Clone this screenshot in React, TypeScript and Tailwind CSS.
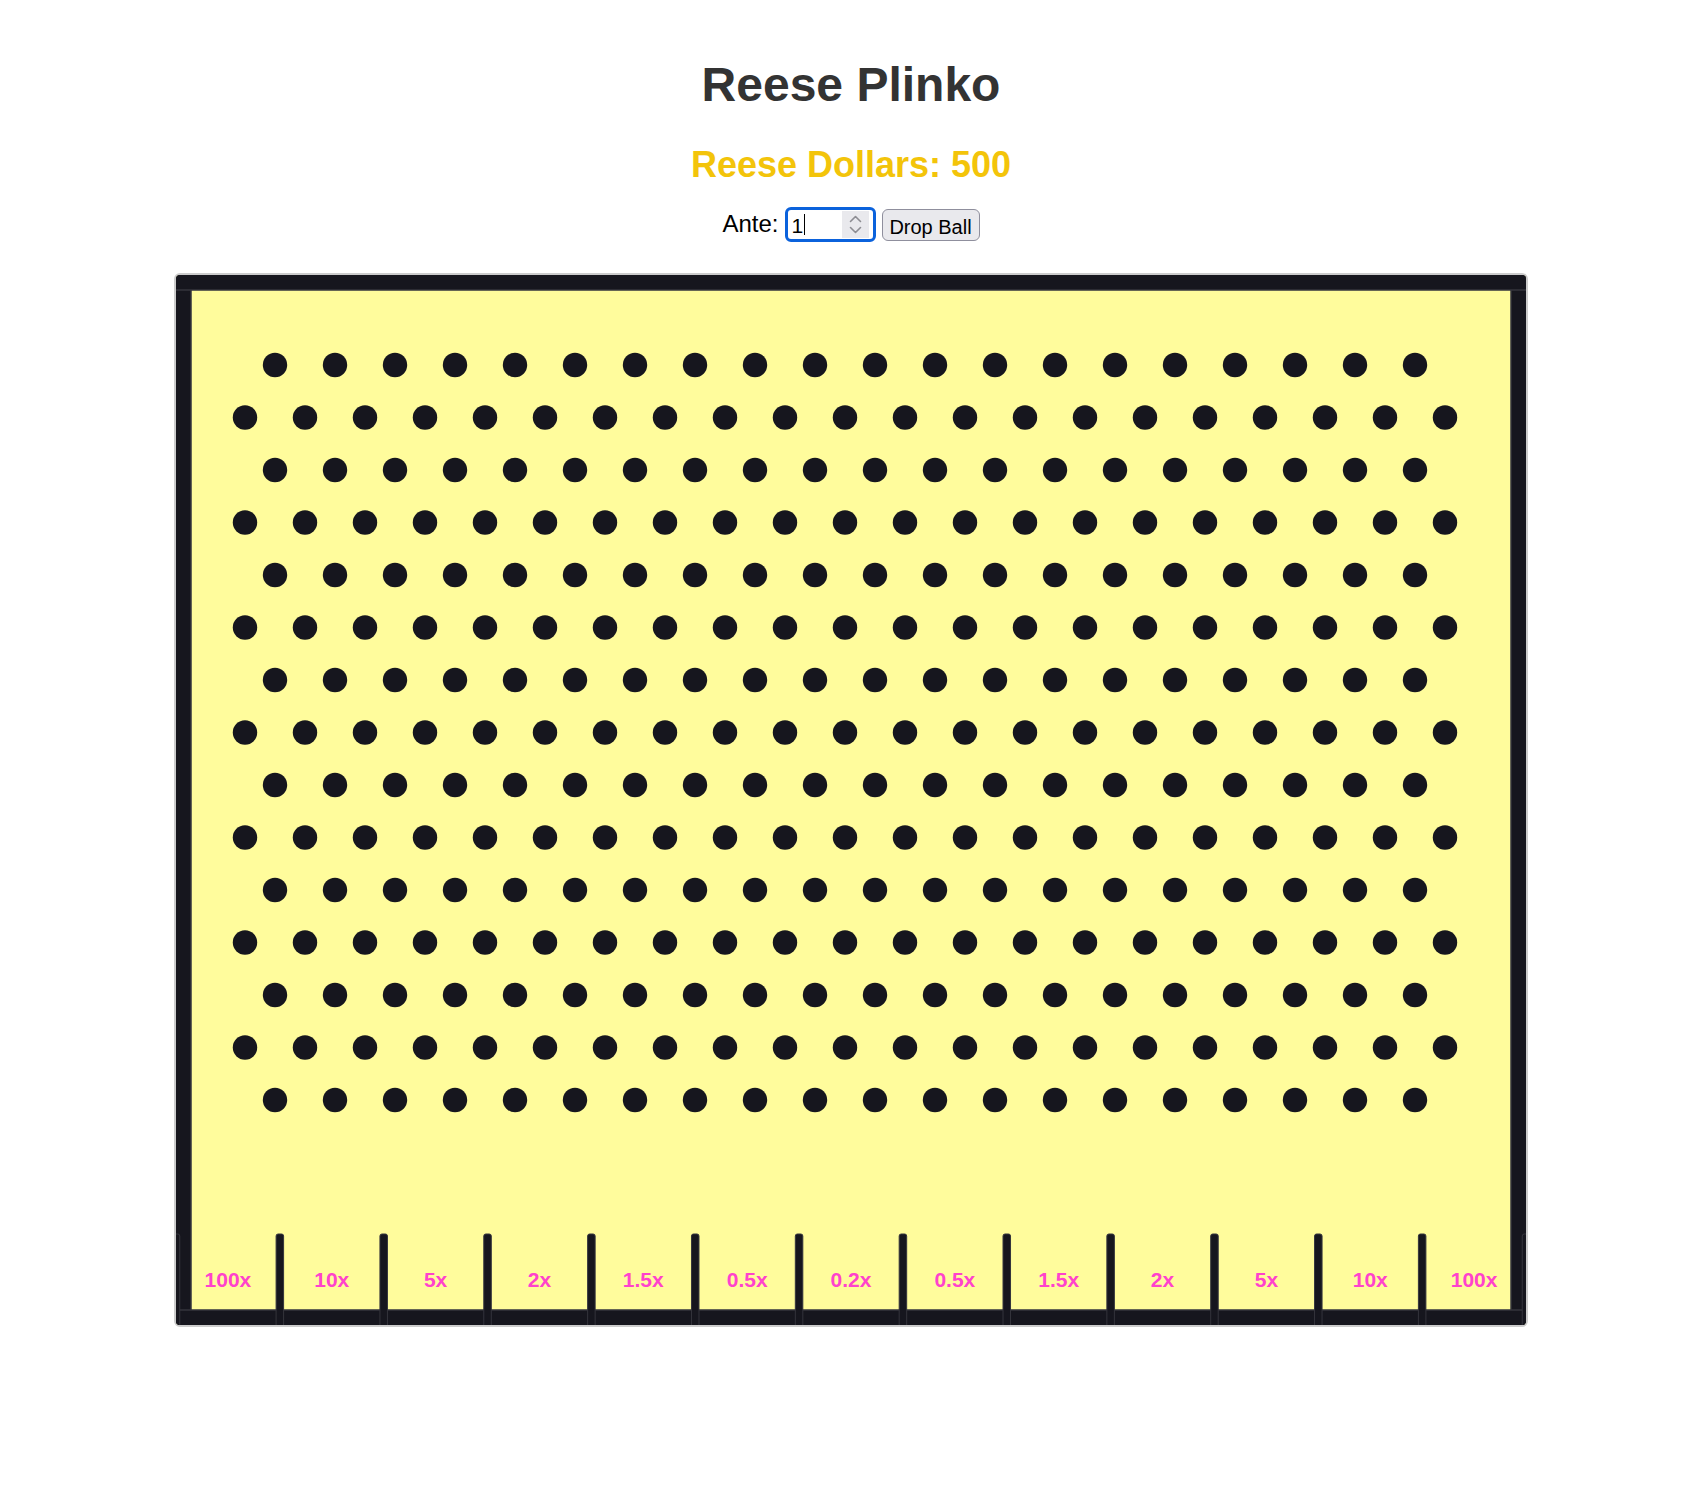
import React from 'react';

const W = 1350;
const H = 1050;
const DARK = '#16161e';
const EDGE = '#34343c';
const SLOT_LABELS = ['100x', '10x', '5x', '2x', '1.5x', '0.5x', '0.2x', '0.5x', '1.5x', '2x', '5x', '10x', '100x'];

// pegs: 15 rows, alternating 20 / 21 across
const pegs: { x: number; y: number }[] = [];
for (let row = 0; row < 15; row++) {
  const count = row % 2 === 0 ? 20 : 21;
  const startX = row % 2 === 0 ? 99 : 69;
  for (let i = 0; i < count; i++) {
    pegs.push({ x: startX + i * 60, y: 90 + row * 52.5 });
  }
}

const slotWidth = W / 13;

function Board() {
  return (
    <svg width={W} height={H} viewBox={`0 0 ${W} ${H}`} className="block">
      <rect x={0} y={0} width={W} height={H} fill="#fffc9c" />

      {/* walls */}
      <rect x={-15} y={-15} width={30} height={H + 30} fill={DARK} stroke={EDGE} strokeWidth={1.5} />
      <rect x={W - 15} y={-15} width={30} height={H + 30} fill={DARK} stroke={EDGE} strokeWidth={1.5} />
      <rect x={-15} y={H - 15} width={W + 30} height={30} fill={DARK} stroke={EDGE} strokeWidth={1.5} />
      <rect x={-15} y={-15} width={W + 30} height={30} fill={DARK} stroke={EDGE} strokeWidth={1.5} />

      {/* slot dividers */}
      {Array.from({ length: 14 }).map((_, k) => (
        <rect
          key={k}
          x={k * slotWidth - 3.75}
          y={959}
          width={7.5}
          height={100}
          rx={2}
          fill={DARK}
          stroke={EDGE}
          strokeWidth={1}
        />
      ))}

      {/* pegs */}
      {pegs.map((p, i) => (
        <circle key={i} cx={p.x} cy={p.y} r={12.2} fill={DARK} />
      ))}

      {/* multipliers */}
      {SLOT_LABELS.map((label, k) => (
        <text
          key={k}
          x={(k + 0.5) * slotWidth}
          y={1012}
          textAnchor="middle"
          fill="#ff42cc"
          fontFamily="'Liberation Sans', Arial, sans-serif"
          fontWeight="bold"
          fontSize={21}
        >
          {label}
        </text>
      ))}
    </svg>
  );
}

export default function App() {
  return (
    <div className="min-h-screen bg-white text-center font-['Liberation_Sans',Arial,sans-serif] pt-[57px]">
      <h1 className="pl-[3px] text-[48px] leading-[56px] font-bold text-[#333]">Reese Plinko</h1>
      <h2 className="pl-[3px] mt-[31px] text-[36px] leading-[42px] font-bold text-[#f3c40a]">Reese Dollars: 500</h2>

      {/* controls */}
      <div className="pl-[3px] mt-[21px] flex justify-center items-start h-[35px]">
        <label className="mt-[1px] text-[24px] leading-[32px] text-black">Ante:</label>
        <div className="ml-[6px] w-[91px] h-[35px] border-[3px] border-[#0b62dc] rounded-[6px] flex items-center pl-[4px] pr-[4px] bg-white">
          <span className="mt-[2px] text-[21px] leading-[21px] text-black">1</span>
          <span className="ml-[1px] w-px h-[21px] bg-black" />
          <div className="ml-auto w-[27px] h-[27px] bg-[#e9e9ed] flex items-center justify-center">
            <svg width="27" height="27" viewBox="0 0 27 27" fill="none" stroke="#8d8d93" strokeWidth="1.6" strokeLinecap="round" strokeLinejoin="round">
              <path d="M8.5 10.5 L13.5 5.5 L18.5 10.5" />
              <path d="M8.5 16.5 L13.5 21.5 L18.5 16.5" />
            </svg>
          </div>
        </div>
        <button className="ml-[6px] mt-[2px] w-[98px] h-[32px] pt-[2px] border-[1.5px] border-[#8f8f9d] bg-[#e9e9ed] rounded-[6px] text-[20px] text-black">
          Drop Ball
        </button>
      </div>

      {/* board */}
      <div className="mt-[31px] flex justify-center pl-[2px]">
        <div className="border-2 border-[#cccccc] rounded-[6px] overflow-hidden">
          <Board />
        </div>
      </div>
    </div>
  );
}
